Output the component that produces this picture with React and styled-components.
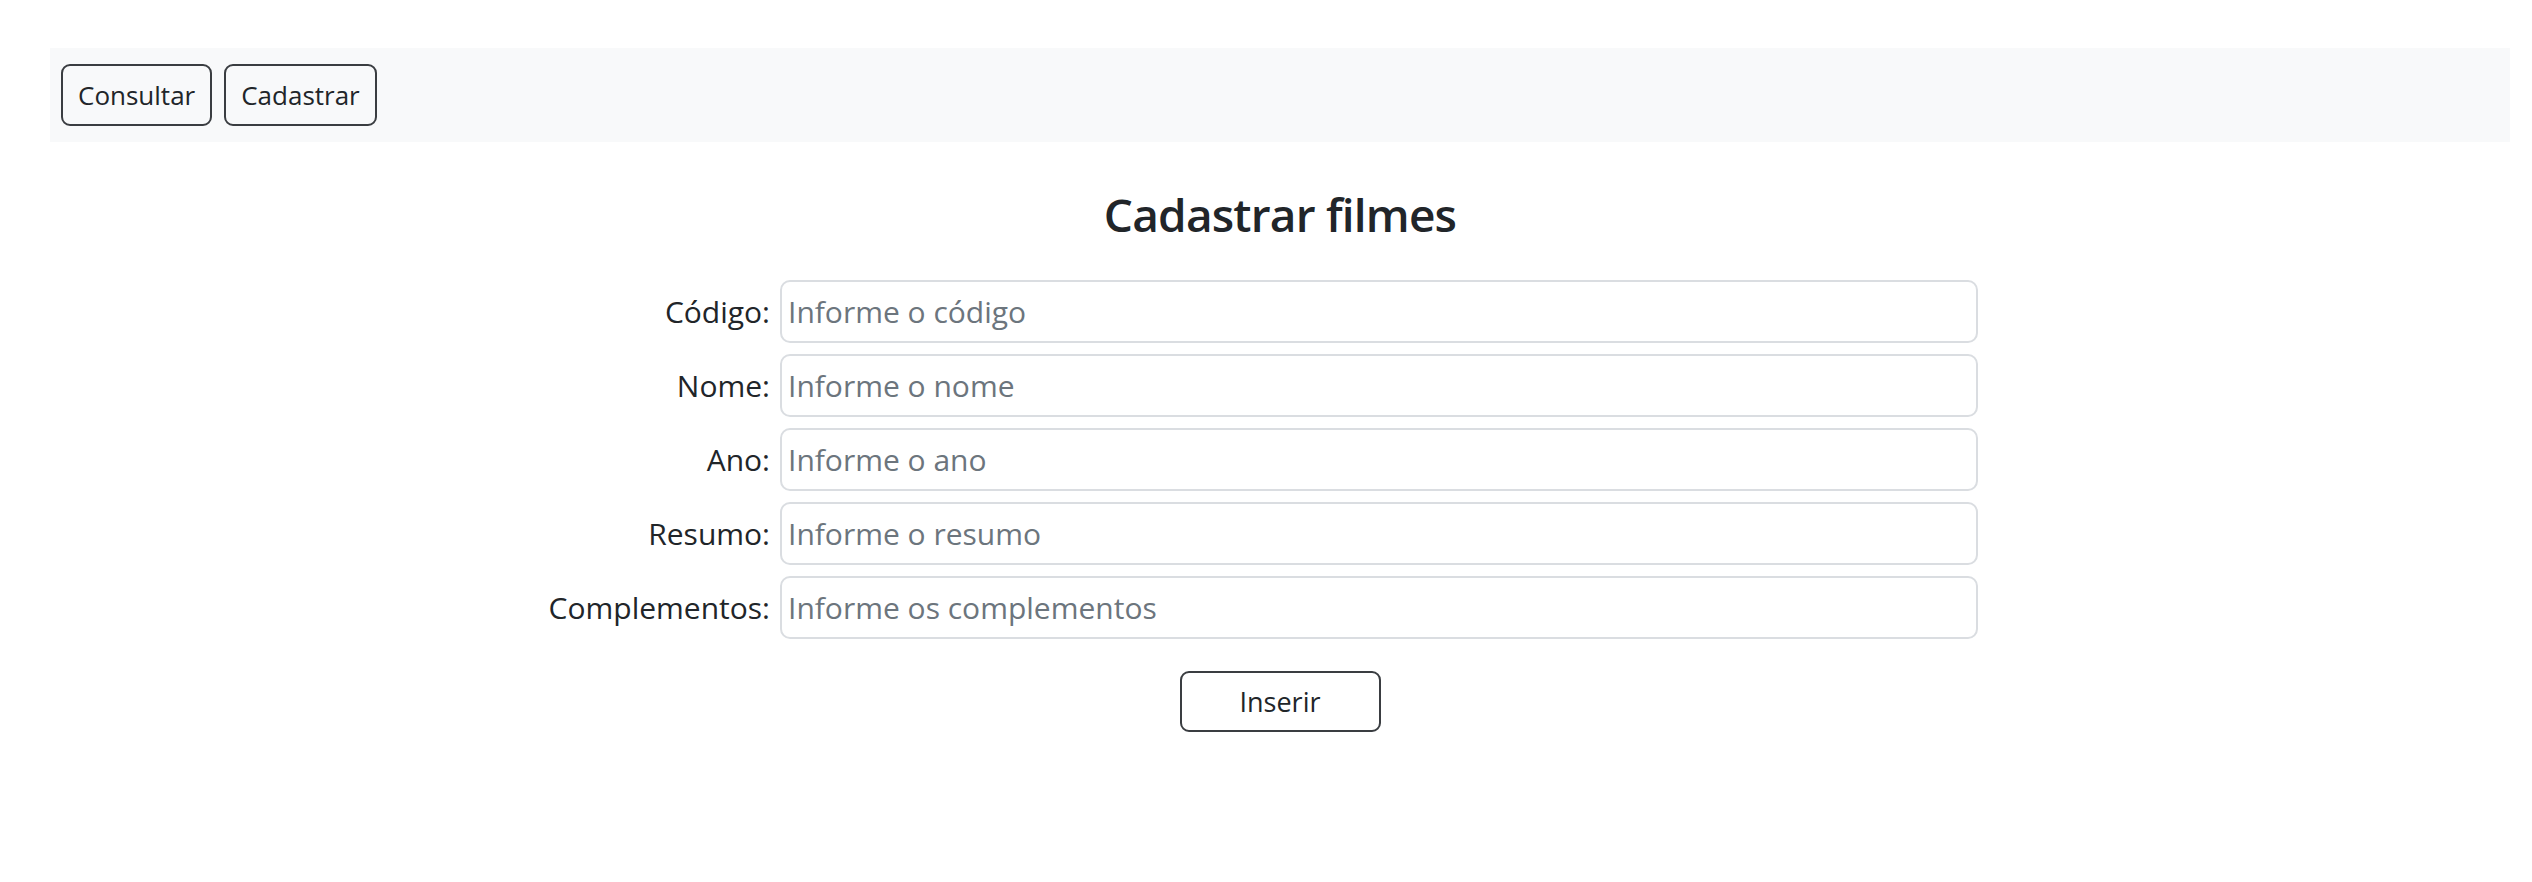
import React from 'react'
import styled, { createGlobalStyle } from 'styled-components'

const GlobalStyle = createGlobalStyle`
  body {
    margin: 0;
    background: #fff;
    color: #212529;
    font-family: 'Open Sans', 'Noto Sans', sans-serif;
  }
`

const fields = [
  { id: 'codigo', label: 'Código:', placeholder: 'Informe o código' },
  { id: 'nome', label: 'Nome:', placeholder: 'Informe o nome' },
  { id: 'ano', label: 'Ano:', placeholder: 'Informe o ano' },
  { id: 'resumo', label: 'Resumo:', placeholder: 'Informe o resumo' },
  { id: 'complementos', label: 'Complementos:', placeholder: 'Informe os complementos' },
]

export default function App() {
  return (
    <>
      <GlobalStyle />
      <Page>
        <NavBar>
          <NavButton>Consultar</NavButton>
          <NavButton>Cadastrar</NavButton>
        </NavBar>
        <Title>Cadastrar filmes</Title>
        <Form onSubmit={e => e.preventDefault()}>
          {fields.map(f => (
            <React.Fragment key={f.id}>
              <Label htmlFor={f.id}>{f.label}</Label>
              <Input id={f.id} placeholder={f.placeholder} />
            </React.Fragment>
          ))}
        </Form>
        <Actions>
          <SubmitButton type="button">Inserir</SubmitButton>
        </Actions>
      </Page>
    </>
  )
}

const Page = styled.div`
  padding: 48px 22px 0 50px;
`

const NavBar = styled.nav`
  display: flex;
  gap: 12px;
  align-items: center;
  height: 94px;
  padding: 0 11px;
  box-sizing: border-box;
  background: #f8f9fa;
`

const NavButton = styled.button`
  height: 62px;
  padding: 0 15px;
  font-family: inherit;
  font-size: 26px;
  color: #212529;
  background: transparent;
  border: 2px solid #3a3d41;
  border-radius: 9px;
  cursor: pointer;
`

const Title = styled.h2`
  margin: 41px 0 35px;
  text-align: center;
  font-size: 46px;
  font-weight: 600;
  letter-spacing: -0.8px;
  line-height: 62px;
  color: #212529;
`

const Form = styled.form`
  display: grid;
  grid-template-columns: 720px 1198px;
  column-gap: 10px;
  row-gap: 11px;
  align-items: center;
`

const Label = styled.label`
  justify-self: end;
  font-size: 30px;
  color: #212529;
`

const Input = styled.input`
  height: 63px;
  box-sizing: border-box;
  padding: 0 6px;
  font-family: inherit;
  font-size: 30px;
  color: #212529;
  border: 2px solid #dadde1;
  border-radius: 10px;
  outline: none;
  &::placeholder {
    color: #6c757d;
  }
`

const Actions = styled.div`
  display: flex;
  justify-content: center;
  margin-top: 32px;
`

const SubmitButton = styled.button`
  width: 201px;
  height: 61px;
  font-family: inherit;
  font-size: 27px;
  color: #212529;
  background: #fff;
  border: 2px solid #3a3d41;
  border-radius: 9px;
  cursor: pointer;
`
